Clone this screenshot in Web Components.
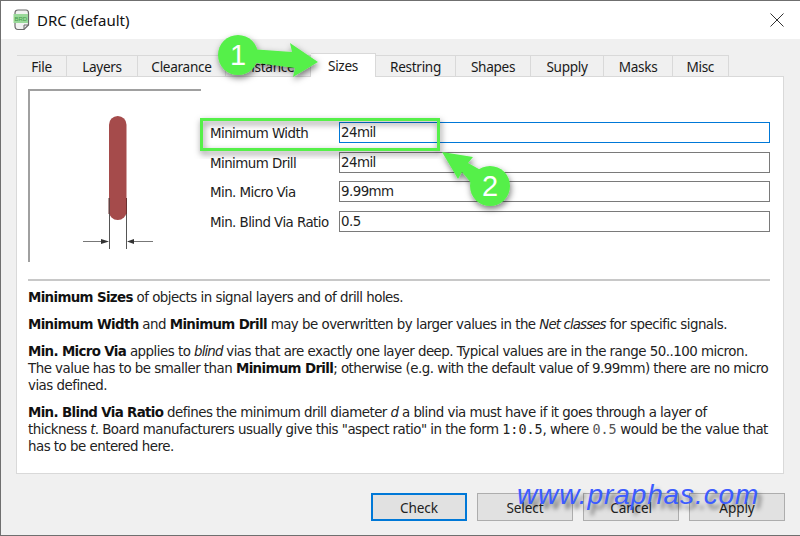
<!DOCTYPE html>
<html>
<head>
<meta charset="utf-8">
<style>
html, body { margin: 0; padding: 0; width: 800px; height: 536px; overflow: hidden; background: #f0f0f0; }
</style>
</head>
<body>
<drc-dialog>
  <drc-tabs slot="tabs" active="Sizes"></drc-tabs>
  <drc-sizes slot="panel"></drc-sizes>
  <drc-button slot="buttons" default>Check</drc-button>
  <drc-button slot="buttons">Select</drc-button>
  <drc-button slot="buttons">Cancel</drc-button>
  <drc-button slot="buttons">Apply</drc-button>
</drc-dialog>
<drc-notes></drc-notes>
<script>
(function() {
  'use strict';
  const UI_FONT = '"Noto Sans", "Open Sans", sans-serif';
  const HELP_FONT = '"DejaVu Sans", Verdana, sans-serif';

  customElements.define('drc-dialog', class extends HTMLElement {
    constructor() {
      super();
      this.attachShadow({mode: 'open'}).innerHTML = `
      <style>
      :host { display: flex; flex-direction: column; width: 800px; height: 536px; box-sizing: border-box; border: 1px solid #6f6f6f; border-width: 1px 0 1px 1px; background: #f0f0f0; color: #111; font: 14px ${UI_FONT}; }
      .title { display: flex; align-items: center; height: 38px; background: #fff; padding-left: 12px; flex: none; }
      .title svg { margin-right: 7px; }
      .title span { font-size: 15px; }
      .close { margin-left: auto; width: 46px; height: 38px; display: flex; align-items: center; justify-content: center; }
      .close svg { margin: 0 0 0 0; }
      .body { padding: 14px 16px 0 15px; flex: none; }
      .buttons { display: flex; gap: 10px; justify-content: flex-end; padding: 19px 15px 0 0; }
      </style>
      <div class="title">
        <svg width="17" height="22" viewBox="0 0 17 22"><path d="M2 4 Q2 1 5 1 H13 Q15.5 1 15.5 4 V16 L11 20.5 H5 Q2 20.5 2 17 Z" fill="#f2f2f2" stroke="#6a6a6a" stroke-width="1.2"/><path d="M15.5 16 H11 V20.5" fill="none" stroke="#6a6a6a"/><rect x="0.5" y="5" width="14.5" height="9" fill="#9ad99a"/><text x="7.8" y="11.8" font-size="6" text-anchor="middle" fill="#3f9a48" font-family="Liberation Sans">BRD</text></svg>
        <span>DRC (default)</span>
        <div class="close"><svg width="14" height="14" viewBox="0 0 14 14"><path d="M0.5 0.5 L13.5 13.5 M13.5 0.5 L0.5 13.5" stroke="#333" stroke-width="1" fill="none"/></svg></div>
      </div>
      <div class="body"><slot name="tabs"></slot><slot name="panel"></slot></div>
      <div class="buttons"><slot name="buttons"></slot></div>`;
    }
  });

  customElements.define('drc-tabs', class extends HTMLElement {
    constructor() {
      super();
      const tabs = [['File',50],['Layers',71],['Clearance',88],['Distance',85],['Sizes',65],['Restring',80],['Shapes',75],['Supply',73],['Masks',69],['Misc',55.5]];
      const active = this.getAttribute('active');
      this.attachShadow({mode: 'open'}).innerHTML = `
      <style>
      :host { display: flex; height: 23px; padding-left: 1px; align-items: flex-end; position: relative; }
      div { box-sizing: border-box; height: 21px; border: 1px solid #d9d9d9; border-bottom: 0; border-left-width: 0; background: #f0f0f0; text-align: center; line-height: 22px; font-size: 13.6px; letter-spacing: -0.3px; color: #1a1a1a; }
      div:first-child { border-left-width: 1px; }
      div.on { background: #fff; line-height: 23px; margin-bottom: -1px; height: 24px; position: relative; }
      </style>
      ${tabs.map(t => `<div style="width:${t[1]}px"${t[0] === active ? ' class="on"' : ''}>${t[0]}</div>`).join('')}`;
    }
  });

  customElements.define('drc-field', class extends HTMLElement {
    constructor() {
      super();
      this.attachShadow({mode: 'open'}).innerHTML = `
      <style>
      :host { display: flex; align-items: center; height: 21px; font: 13.4px ${HELP_FONT}; letter-spacing: -0.55px; color: #222; }
      label { width: 129px; flex: none; white-space: nowrap; padding-top: 2px; }
      .box { flex: 1; box-sizing: border-box; height: 21px; line-height: 20px; border: 1px solid #7a7a7a; background: #fff; padding-left: 1px; }
      :host([focused]) .box { border-color: #0078d7; }
      </style>
      <label>${this.getAttribute('label')}</label><div class="box">${this.getAttribute('value')}</div>`;
    }
  });

  customElements.define('drc-button', class extends HTMLElement {
    constructor() {
      super();
      this.attachShadow({mode: 'open'}).innerHTML = `
      <style>
      :host { display: block; box-sizing: border-box; width: 96px; height: 28px; border: 1px solid #adadad; background: #e1e1e1; text-align: center; line-height: 27px; font-size: 13.6px; letter-spacing: -0.1px; color: #222; }
      :host([default]) { border: 2px solid #0078d7; line-height: 25px; }
      </style><slot></slot>`;
    }
  });

  customElements.define('drc-sizes', class extends HTMLElement {
    constructor() {
      super();
      this.attachShadow({mode: 'open'}).innerHTML = `
      <style>
      :host { display: block; box-sizing: border-box; width: 768px; height: 398px; background: #fff; border: 1px solid #d9d9d9; padding: 12px 13px 0 11px; }
      .top { display: flex; height: 174px; }
      .fig { width: 182px; flex: none; }
      .fig svg { display: block; }
      .form { flex: 1; display: grid; grid-auto-rows: 21px; row-gap: 8.7px; padding-top: 33px; }
      hr { border: 0; border-top: 2px solid #c8c8c8; margin: 16px 0 0; height: 0; }
      .help { font: 13.4px/16.9px ${HELP_FONT}; letter-spacing: -0.515px; color: #222; margin-top: 9px; }
      p { margin: 0 0 10.3px; white-space: nowrap; }
      b { color: #111; letter-spacing: -0.65px; }
      i { letter-spacing: -0.9px; }
      code { font: 13.4px "DejaVu Sans Mono", monospace; letter-spacing: 0; }
      code.pale { color: #555; }
      </style>
      <div class="top">
        <div class="fig">
          <svg width="173" height="173" viewBox="0 0 173 173">
            <path d="M173 1 H1 V173" fill="none" stroke="#a0a0a0" stroke-width="2"/>
            <rect x="81" y="27" width="17.5" height="104" rx="8.7" fill="#a54b4b"/>
            <path d="M81.5 109 V160 M98.5 109 V160" stroke="#555" stroke-width="1" fill="none"/>
            <path d="M81 109 V125 M98.5 109 V125" stroke="#6b3030" stroke-width="1" fill="none"/>
            <path d="M55 152.5 H74 M106 152.5 H125" stroke="#777" stroke-width="1" fill="none"/>
            <path d="M73 150 L81 152.5 L73 155 Z M106 150 L99 152.5 L106 155 Z" fill="#333"/>
          </svg>
        </div>
        <div class="form">
          <drc-field label="Minimum Width" value="24mil" focused></drc-field>
          <drc-field label="Minimum Drill" value="24mil"></drc-field>
          <drc-field label="Min. Micro Via" value="9.99mm"></drc-field>
          <drc-field label="Min. Blind Via Ratio" value="0.5"></drc-field>
        </div>
      </div>
      <hr>
      <div class="help">
        <p><b>Minimum Sizes</b> of objects in signal layers and of drill holes.</p>
        <p><b>Minimum Width</b> and <b>Minimum Drill</b> may be overwritten by larger values in the <i>Net classes</i> for specific signals.</p>
        <p><b>Min. Micro Via</b> applies to <i>blind</i> vias that are exactly one layer deep. Typical values are in the range 50..100 micron.<br>The value has to be smaller than <b>Minimum Drill</b>; otherwise (e.g. with the default value of 9.99mm) there are no micro<br>vias defined.</p>
        <p><b>Min. Blind Via Ratio</b> defines the minimum drill diameter <i>d</i> a blind via must have if it goes through a layer of<br>thickness <i>t</i>. Board manufacturers usually give this "aspect ratio" in the form <code>1:0.5</code>, where <code class="pale">0.5</code> would be the value that<br>has to be entered here.</p>
      </div>`;
    }
  });

  // callouts and watermark drawn over the dialog
  customElements.define('drc-notes', class extends HTMLElement {
    constructor() {
      super();
      this.attachShadow({mode: 'open'}).innerHTML = `
      <style>
      :host { position: absolute; left: 0; top: 0; width: 800px; height: 536px; z-index: 2; pointer-events: none; }
      svg { position: absolute; left: 0; top: 0; }
      .num { position: absolute; width: 40px; text-align: center; color: #fff; font: 29px/40px "Liberation Sans", sans-serif; }
      .mark { position: absolute; left: 517px; top: 478px; font: italic 28px/34px "Liberation Sans", sans-serif; letter-spacing: 0.9px; color: #3c5cff; text-shadow: 4px 5px 4px rgba(0,0,0,.5); white-space: nowrap; }
      </style>
      <svg width="800" height="536" viewBox="0 0 800 536">
        <defs><filter id="s" x="-20%" y="-20%" width="140%" height="150%"><feDropShadow dx="1" dy="3" stdDeviation="3" flood-color="#000" flood-opacity=".5"/></filter></defs>
        <g filter="url(#s)">
          <path d="M250 49 L292 52 L290 43 L318 62 L293 77 L295 68 L250 62 Z" fill="#55f04a"/>
          <circle cx="238" cy="55" r="20" fill="#55f04a"/>
        </g>
        <rect x="201.5" y="119.5" width="237" height="30" fill="none" stroke="#55f04a" stroke-width="3" filter="url(#s)"/>
        <g filter="url(#s)">
          <path d="M442 152 L473 157 L468 163 L495 178 L482 196 L462 172 L458 179 Z" fill="#55f04a"/>
          <circle cx="490" cy="186" r="20" fill="#55f04a"/>
        </g>
      </svg>
      <div class="num" style="left:218px;top:35px">1</div>
      <div class="num" style="left:470px;top:166px">2</div>
      <div class="mark">www.praphas.com</div>`;
    }
  });
}());
</script>
</body>
</html>
